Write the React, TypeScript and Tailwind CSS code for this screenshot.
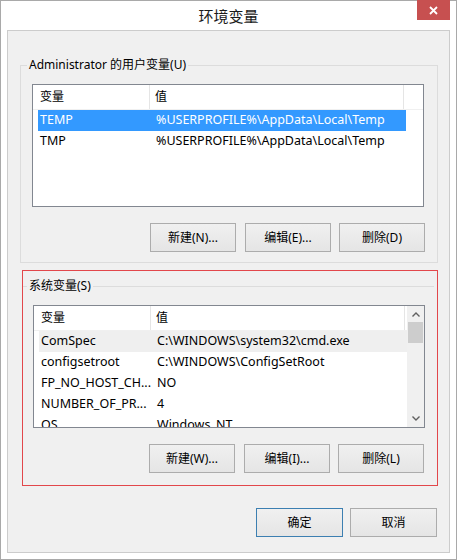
import React from "react";

const font = { fontFamily: '"Noto Sans", "Noto Sans CJK SC", sans-serif' };

function Btn({ label, primary, className = "" }: { label: string; primary?: boolean; className?: string }) {
  return (
    <div
      className={
        "h-[29px] w-[86px] flex items-center justify-center text-[12px] text-black border bg-gradient-to-b from-[#f0f0f0] to-[#e5e5e5] " +
        (primary ? "border-[#3c7fb1] " : "border-[#acacac] ") +
        className
      }
    >
      {label}
    </div>
  );
}

type Row = [string, string];

function ListView({ rows, selected, soft, scroll }: { rows: Row[]; selected?: number; soft?: number; scroll?: boolean }) {
  return (
    <div className="w-[392px] h-[123px] border border-[#828790] bg-white flex overflow-hidden">
      <div className="flex-1 flex flex-col min-w-0">
        <div className="h-[25px] shrink-0 flex border-b border-[#f0f0f0] text-[12px] text-black">
          <div className="w-[117px] pl-[7px] flex items-center border-r border-[#e5e5e5]">变量</div>
          <div className="w-[254px] pl-[5px] flex items-center border-r border-[#e5e5e5]">值</div>
        </div>
        {rows.map((r, i) => {
          const bg = i === selected ? "bg-[#3399ff] text-white" : i === soft ? "bg-[#efefef] text-black" : "text-black";
          return (
            <div key={i} className={"ml-[5px] w-[368px] h-[21px] shrink-0 flex items-center text-[12.5px] whitespace-nowrap " + bg}>
              <div className="w-[118px] pl-[2px]">{r[0]}</div>
              <div>{r[1]}</div>
            </div>
          );
        })}
      </div>
      {scroll && (
        <div className="w-[17px] shrink-0 bg-[#f0f0f0] flex flex-col">
          <div className="h-[17px] flex items-center justify-center">
            <svg width="8" height="5" viewBox="0 0 8 5">
              <path d="M0.5 4.5 L4 1 L7.5 4.5" stroke="#606060" strokeWidth="1.4" fill="none" />
            </svg>
          </div>
          <div className="mt-[-1px] mx-[1px] h-[21px] bg-[#cdcdcd]" />
          <div className="flex-1" />
          <div className="h-[17px] flex items-center justify-center">
            <svg width="8" height="5" viewBox="0 0 8 5">
              <path d="M0.5 0.5 L4 4 L7.5 0.5" stroke="#606060" strokeWidth="1.4" fill="none" />
            </svg>
          </div>
        </div>
      )}
    </div>
  );
}

export default function App() {
  return (
    <div style={font} className="w-[457px] h-[560px] border border-[#a9a9a9] bg-white flex flex-col">
      <div className="h-[29px] shrink-0 relative flex items-center justify-center">
        <span className="text-[15px] text-[#1a1a1a] mt-[1px]" style={{ fontFamily: '"Noto Sans CJK SC", sans-serif' }}>
          环境变量
        </span>
        <div className="absolute top-[-1px] right-[6px] w-[33px] h-[20px] bg-[#c75050] flex items-center justify-center">
          <svg width="9" height="9" viewBox="0 0 9 9">
            <path d="M1 1 L8 8 M8 1 L1 8" stroke="white" strokeWidth="1.8" />
          </svg>
        </div>
      </div>
      <div className="mx-[6px] h-[523px] shrink-0 border border-[#cccccc] bg-[#f0f0f0] flex flex-col">
        <fieldset className="mt-[26px] ml-[12px] mr-[11px] border border-[#dcdcdc] pb-[10px]">
          <legend className="ml-[6px] px-[2px] text-[12px] leading-4 text-black">Administrator 的用户变量(U)</legend>
          <div className="mt-[11px] ml-[11px]">
            <ListView
              rows={[
                ["TEMP", "%USERPROFILE%\\AppData\\Local\\Temp"],
                ["TMP", "%USERPROFILE%\\AppData\\Local\\Temp"],
              ]}
              selected={0}
            />
          </div>
          <div className="mt-[16px] flex justify-end pr-[12px]">
            <Btn label="新建(N)..." className="mr-[9px]" />
            <Btn label="编辑(E)..." className="mr-[8px]" />
            <Btn label="删除(D)" />
          </div>
        </fieldset>
        <div className="mt-[7px] ml-[14px] w-[416px] border border-[#e2474b] pb-[12px]">
          <fieldset className="mt-[7px] mr-[3px] border-t border-[#dcdcdc]">
            <legend className="ml-[4px] px-[2px] text-[12px] leading-4 text-black">系统变量(S)</legend>
            <div className="mt-[11px] ml-[10px]">
              <ListView
                rows={[
                  ["ComSpec", "C:\\WINDOWS\\system32\\cmd.exe"],
                  ["configsetroot", "C:\\WINDOWS\\ConfigSetRoot"],
                  ["FP_NO_HOST_CH...", "NO"],
                  ["NUMBER_OF_PR...", "4"],
                  ["OS", "Windows_NT"],
                ]}
                soft={0}
                scroll
              />
            </div>
          </fieldset>
          <div className="mt-[16px] flex justify-end pr-[13px]">
            <Btn label="新建(W)..." className="mr-[9px]" />
            <Btn label="编辑(I)..." className="mr-[8px]" />
            <Btn label="删除(L)" />
          </div>
        </div>
        <div className="mt-[22px] flex justify-end pr-[12px]">
          <Btn label="确定" primary className="w-[87px] mr-[7px]" />
          <Btn label="取消" className="w-[87px]" />
        </div>
      </div>
    </div>
  );
}
